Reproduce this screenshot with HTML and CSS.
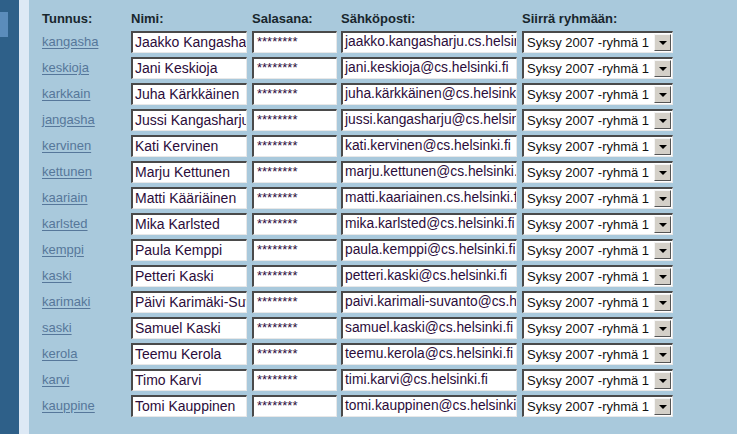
FILE: index.html
```html
<!DOCTYPE html>
<html>
<head>
<meta charset="utf-8">
<link rel="stylesheet" href="styles.css">
</head>
<body>
<div class="page">
  <div class="sidebar"><div class="tab"></div></div>
  <div class="stripe"></div>
  <div class="content">
    <div class="grid">
      <div class="head">Tunnus:</div>
      <div class="head">Nimi:</div>
      <div class="head">Salasana:</div>
      <div class="head">Sähköposti:</div>
      <div class="head">Siirrä ryhmään:</div>

      <a class="user" href="#">kangasha</a>
      <div class="field name">Jaakko Kangasharju</div>
      <div class="field pass">********</div>
      <div class="field mail">jaakko.kangasharju.cs.helsinki.fi</div>
      <div class="select"><span>Syksy 2007 -ryhmä 1</span><i class="btn"></i></div>

      <a class="user" href="#">keskioja</a>
      <div class="field name">Jani Keskioja</div>
      <div class="field pass">********</div>
      <div class="field mail">jani.keskioja@cs.helsinki.fi</div>
      <div class="select"><span>Syksy 2007 -ryhmä 1</span><i class="btn"></i></div>

      <a class="user" href="#">karkkain</a>
      <div class="field name">Juha Kärkkäinen</div>
      <div class="field pass">********</div>
      <div class="field mail">juha.kärkkäinen@cs.helsinki.fi</div>
      <div class="select"><span>Syksy 2007 -ryhmä 1</span><i class="btn"></i></div>

      <a class="user" href="#">jangasha</a>
      <div class="field name">Jussi Kangasharju</div>
      <div class="field pass">********</div>
      <div class="field mail">jussi.kangasharju@cs.helsinki.fi</div>
      <div class="select"><span>Syksy 2007 -ryhmä 1</span><i class="btn"></i></div>

      <a class="user" href="#">kervinen</a>
      <div class="field name">Kati Kervinen</div>
      <div class="field pass">********</div>
      <div class="field mail">kati.kervinen@cs.helsinki.fi</div>
      <div class="select"><span>Syksy 2007 -ryhmä 1</span><i class="btn"></i></div>

      <a class="user" href="#">kettunen</a>
      <div class="field name">Marju Kettunen</div>
      <div class="field pass">********</div>
      <div class="field mail">marju.kettunen@cs.helsinki.fi</div>
      <div class="select"><span>Syksy 2007 -ryhmä 1</span><i class="btn"></i></div>

      <a class="user" href="#">kaariain</a>
      <div class="field name">Matti Kääriäinen</div>
      <div class="field pass">********</div>
      <div class="field mail">matti.kaariainen.cs.helsinki.fi</div>
      <div class="select"><span>Syksy 2007 -ryhmä 1</span><i class="btn"></i></div>

      <a class="user" href="#">karlsted</a>
      <div class="field name">Mika Karlsted</div>
      <div class="field pass">********</div>
      <div class="field mail">mika.karlsted@cs.helsinki.fi</div>
      <div class="select"><span>Syksy 2007 -ryhmä 1</span><i class="btn"></i></div>

      <a class="user" href="#">kemppi</a>
      <div class="field name">Paula Kemppi</div>
      <div class="field pass">********</div>
      <div class="field mail">paula.kemppi@cs.helsinki.fi</div>
      <div class="select"><span>Syksy 2007 -ryhmä 1</span><i class="btn"></i></div>

      <a class="user" href="#">kaski</a>
      <div class="field name">Petteri Kaski</div>
      <div class="field pass">********</div>
      <div class="field mail">petteri.kaski@cs.helsinki.fi</div>
      <div class="select"><span>Syksy 2007 -ryhmä 1</span><i class="btn"></i></div>

      <a class="user" href="#">karimaki</a>
      <div class="field name">Päivi Karimäki-Suvanto</div>
      <div class="field pass">********</div>
      <div class="field mail">paivi.karimali-suvanto@cs.helsinki.fi</div>
      <div class="select"><span>Syksy 2007 -ryhmä 1</span><i class="btn"></i></div>

      <a class="user" href="#">saski</a>
      <div class="field name">Samuel Kaski</div>
      <div class="field pass">********</div>
      <div class="field mail">samuel.kaski@cs.helsinki.fi</div>
      <div class="select"><span>Syksy 2007 -ryhmä 1</span><i class="btn"></i></div>

      <a class="user" href="#">kerola</a>
      <div class="field name">Teemu Kerola</div>
      <div class="field pass">********</div>
      <div class="field mail">teemu.kerola@cs.helsinki.fi</div>
      <div class="select"><span>Syksy 2007 -ryhmä 1</span><i class="btn"></i></div>

      <a class="user" href="#">karvi</a>
      <div class="field name">Timo Karvi</div>
      <div class="field pass">********</div>
      <div class="field mail">timi.karvi@cs.helsinki.fi</div>
      <div class="select"><span>Syksy 2007 -ryhmä 1</span><i class="btn"></i></div>

      <a class="user" href="#">kauppine</a>
      <div class="field name">Tomi Kauppinen</div>
      <div class="field pass">********</div>
      <div class="field mail">tomi.kauppinen@cs.helsinki.fi</div>
      <div class="select"><span>Syksy 2007 -ryhmä 1</span><i class="btn"></i></div>
    </div>
  </div>
</div>
</body>
</html>
```
FILE: styles.css
```css
html, body {
  margin: 0;
  padding: 0;
}
body {
  width: 737px;
  height: 434px;
  overflow: hidden;
  font-family: "Liberation Sans", Arial, sans-serif;
  font-size: 13px;
  background: #a9c9dc;
}
.page {
  display: flex;
  height: 434px;
}
.sidebar {
  width: 19px;
  flex: none;
  background: #2e6089;
  padding-top: 12px;
  box-sizing: border-box;
}
.tab {
  width: 8px;
  height: 25px;
  background: #5b8cbb;
}
.stripe {
  width: 10px;
  flex: none;
  background: #dde9f5;
}
.content {
  flex: 1;
  background: #a9c9dc;
  padding: 9px 0 0 13px;
}
.grid {
  display: grid;
  grid-template-columns: 89px 121px 89px 181px 151px;
  grid-template-rows: 18px;
  grid-auto-rows: 22px;
  row-gap: 4px;
  align-items: center;
}
.head {
  font-weight: bold;
  color: #18262c;
  align-self: start;
  line-height: 19px;
}
.user {
  color: #56779a;
  text-decoration: underline;
  text-underline-offset: 2px;
  line-height: 22px;
}
.field, .select {
  height: 22px;
  box-sizing: border-box;
  background: #fff;
  border-style: solid;
  border-width: 2px 1px 1px 2px;
  border-color: #4a4a4a #e8e8e8 #e8e8e8 #4a4a4a;
  color: #2b0c3a;
  line-height: 18px;
  white-space: nowrap;
  overflow: hidden;
  padding-left: 2px;
  font-size: 14px;
}
.name { width: 116px; }
.pass { width: 85px; font-size: 13px; padding-left: 3px; }
.mail { width: 176px; font-size: 13.8px; }
.select {
  width: 151px;
  display: flex;
  align-items: center;
  justify-content: space-between;
  padding-left: 3px;
  padding-right: 1px;
  color: #111;
  font-size: 13px;
}
.btn {
  width: 17px;
  height: 17px;
  box-sizing: border-box;
  background: #d4d0c8;
  border-style: solid;
  border-width: 1px;
  border-color: #f4f4f4 #555 #555 #f4f4f4;
  position: relative;
  flex: none;
}
.btn::after {
  content: "";
  position: absolute;
  left: 4px;
  top: 6px;
  border-left: 4px solid transparent;
  border-right: 4px solid transparent;
  border-top: 4px solid #000;
}
```
